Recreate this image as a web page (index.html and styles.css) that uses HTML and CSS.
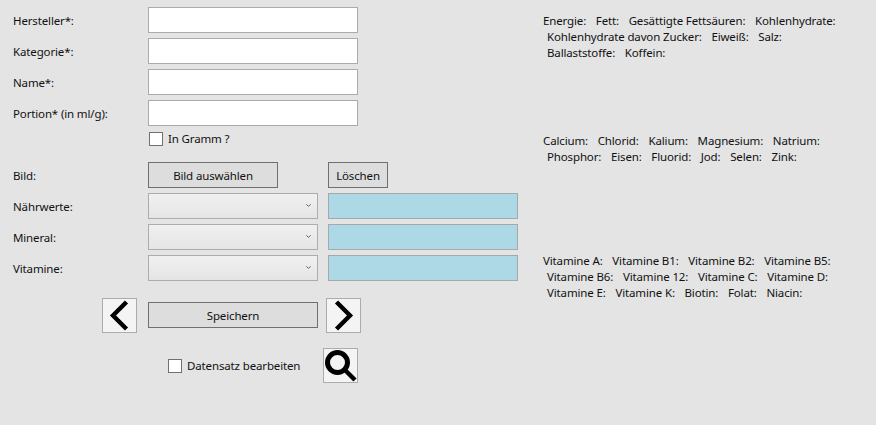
FILE: index.html
```html
<!DOCTYPE html>
<html lang="de">
<head>
<meta charset="utf-8">
<title>Produkt</title>
<link rel="stylesheet" href="styles.css">
</head>
<body>
<div class="page">
  <form class="form">
    <div class="grid">
      <label class="label">Hersteller*:</label>
      <input class="text-input" type="text">
      <label class="label">Kategorie*:</label>
      <input class="text-input" type="text">
      <label class="label">Name*:</label>
      <input class="text-input" type="text">
      <label class="label">Portion* (in ml/g):</label>
      <input class="text-input" type="text">
      <label class="check gram"><span class="box"></span><span class="gram-text">In Gramm ?</span></label>
      <span class="label">Bild:</span>
      <button class="btn pick" type="button">Bild auswählen</button>
      <button class="btn clear" type="button">Löschen</button>
      <span class="label">Nährwerte:</span>
      <div class="combo"><svg class="caret" viewBox="0 0 5 3" width="5" height="3"><path d="M.3.3 2.5 2.4 4.7.3" fill="none" stroke="#606060"/></svg></div>
      <div class="blue"></div>
      <span class="label">Mineral:</span>
      <div class="combo"><svg class="caret" viewBox="0 0 5 3" width="5" height="3"><path d="M.3.3 2.5 2.4 4.7.3" fill="none" stroke="#606060"/></svg></div>
      <div class="blue"></div>
      <span class="label">Vitamine:</span>
      <div class="combo"><svg class="caret" viewBox="0 0 5 3" width="5" height="3"><path d="M.3.3 2.5 2.4 4.7.3" fill="none" stroke="#606060"/></svg></div>
      <div class="blue"></div>
    </div>
    <div class="nav-row">
      <button class="icon-btn" type="button" aria-label="Zurück"><svg viewBox="0 0 33 33" width="33" height="33"><path d="M23.5 3 10 16.5 23.5 30" fill="none" stroke="#000" stroke-width="4.4"/></svg></button>
      <button class="btn save" type="button">Speichern</button>
      <button class="icon-btn" type="button" aria-label="Weiter"><svg viewBox="0 0 33 33" width="33" height="33"><path d="M9.5 3 23 16.5 9.5 30" fill="none" stroke="#000" stroke-width="4.4"/></svg></button>
    </div>
    <div class="search-row">
      <label class="check edit"><span class="box"></span>Datensatz bearbeiten</label>
      <button class="icon-btn" type="button" aria-label="Suchen"><svg viewBox="0 0 33 33" width="33" height="33"><circle cx="13.5" cy="13.5" r="10" fill="none" stroke="#000" stroke-width="5"/><path d="M21 21 31 31" fill="none" stroke="#000" stroke-width="4.5"/></svg></button>
    </div>
  </form>
  <aside class="info">
    <section class="block">
      <div class="line"><span>Energie:</span><span>Fett:</span><span>Gesättigte Fettsäuren:</span><span>Kohlenhydrate:</span></div>
      <div class="line indent"><span>Kohlenhydrate davon Zucker:</span><span>Eiweiß:</span><span>Salz:</span></div>
      <div class="line indent"><span>Ballaststoffe:</span><span>Koffein:</span></div>
    </section>
    <section class="block">
      <div class="line"><span>Calcium:</span><span>Chlorid:</span><span>Kalium:</span><span>Magnesium:</span><span>Natrium:</span></div>
      <div class="line indent"><span>Phosphor:</span><span>Eisen:</span><span>Fluorid:</span><span>Jod:</span><span>Selen:</span><span>Zink:</span></div>
    </section>
    <section class="block">
      <div class="line"><span>Vitamine A:</span><span>Vitamine B1:</span><span>Vitamine B2:</span><span>Vitamine B5:</span></div>
      <div class="line indent"><span>Vitamine B6:</span><span>Vitamine 12:</span><span>Vitamine C:</span><span>Vitamine D:</span></div>
      <div class="line indent"><span>Vitamine E:</span><span>Vitamine K:</span><span>Biotin:</span><span>Folat:</span><span>Niacin:</span></div>
    </section>
  </aside>
</div>
</body>
</html>
```
FILE: styles.css
```css
* { box-sizing: border-box; }
html, body { margin: 0; height: 100%; }
body {
  background: #e4e4e4;
  color: #111;
  font-family: "Noto Sans", "Open Sans", sans-serif;
  font-size: 11.5px;
  letter-spacing: -0.14px;
  overflow: hidden;
}
.page { display: flex; width: 876px; height: 425px; }
.form { width: 543px; flex: none; padding-top: 7px; }
.grid {
  display: grid;
  grid-template-columns: 148px 170px 10px 190px;
  grid-auto-rows: 26px;
  row-gap: 5px;
}
.label { grid-column: 1; align-self: center; padding-left: 13px; }
.text-input {
  grid-column: 2 / 5;
  width: 210px;
  height: 26px;
  background: #fff;
  border: 1px solid #ababab;
  border-radius: 0;
  padding: 0;
  outline: none;
}
.check { display: flex; align-items: center; gap: 5px; }
.gram { grid-column: 2 / 5; align-self: start; margin-top: 1px; padding-left: 1px; }
.gram-text { margin-top: -2px; }
.box {
  width: 14px;
  height: 14px;
  background: #fff;
  border: 1px solid #707070;
  flex: none;
}
.btn {
  height: 26px;
  background: #dddddd;
  border: 1px solid #707070;
  border-radius: 0;
  color: inherit;
  font: inherit;
  letter-spacing: inherit;
  padding: 0;
}
.pick { grid-column: 2; width: 130px; }
.clear { grid-column: 4; width: 60px; }
.save { width: 170px; margin: 4px 8px 0 11px; }
.combo {
  grid-column: 2;
  display: flex;
  align-items: center;
  justify-content: flex-end;
  padding-right: 6px;
  background: linear-gradient(#f0f0f0, #e5e5e5);
  border: 1px solid #acacac;
}
.caret { margin-top: -1px; }
.blue {
  grid-column: 4;
  background: #add8e6;
  border: 1px solid #a5a9ab;
}
.nav-row {
  display: flex;
  align-items: flex-start;
  height: 35px;
  margin-top: 17px;
  padding-left: 102px;
}
.icon-btn {
  width: 35px;
  height: 35px;
  flex: none;
  padding: 0;
  background: #f4f4f4;
  border: 1px solid #acacac;
  border-radius: 0;
  display: block;
}
.icon-btn svg { display: block; }
.search-row {
  display: flex;
  align-items: center;
  margin-top: 15px;
  padding-left: 168px;
}
.edit { width: 155px; }
.info { padding-top: 13px; line-height: 16px; }
.block { height: 120px; }
.line { display: flex; gap: 9.7px; white-space: nowrap; }
.indent { padding-left: 4px; }
```
